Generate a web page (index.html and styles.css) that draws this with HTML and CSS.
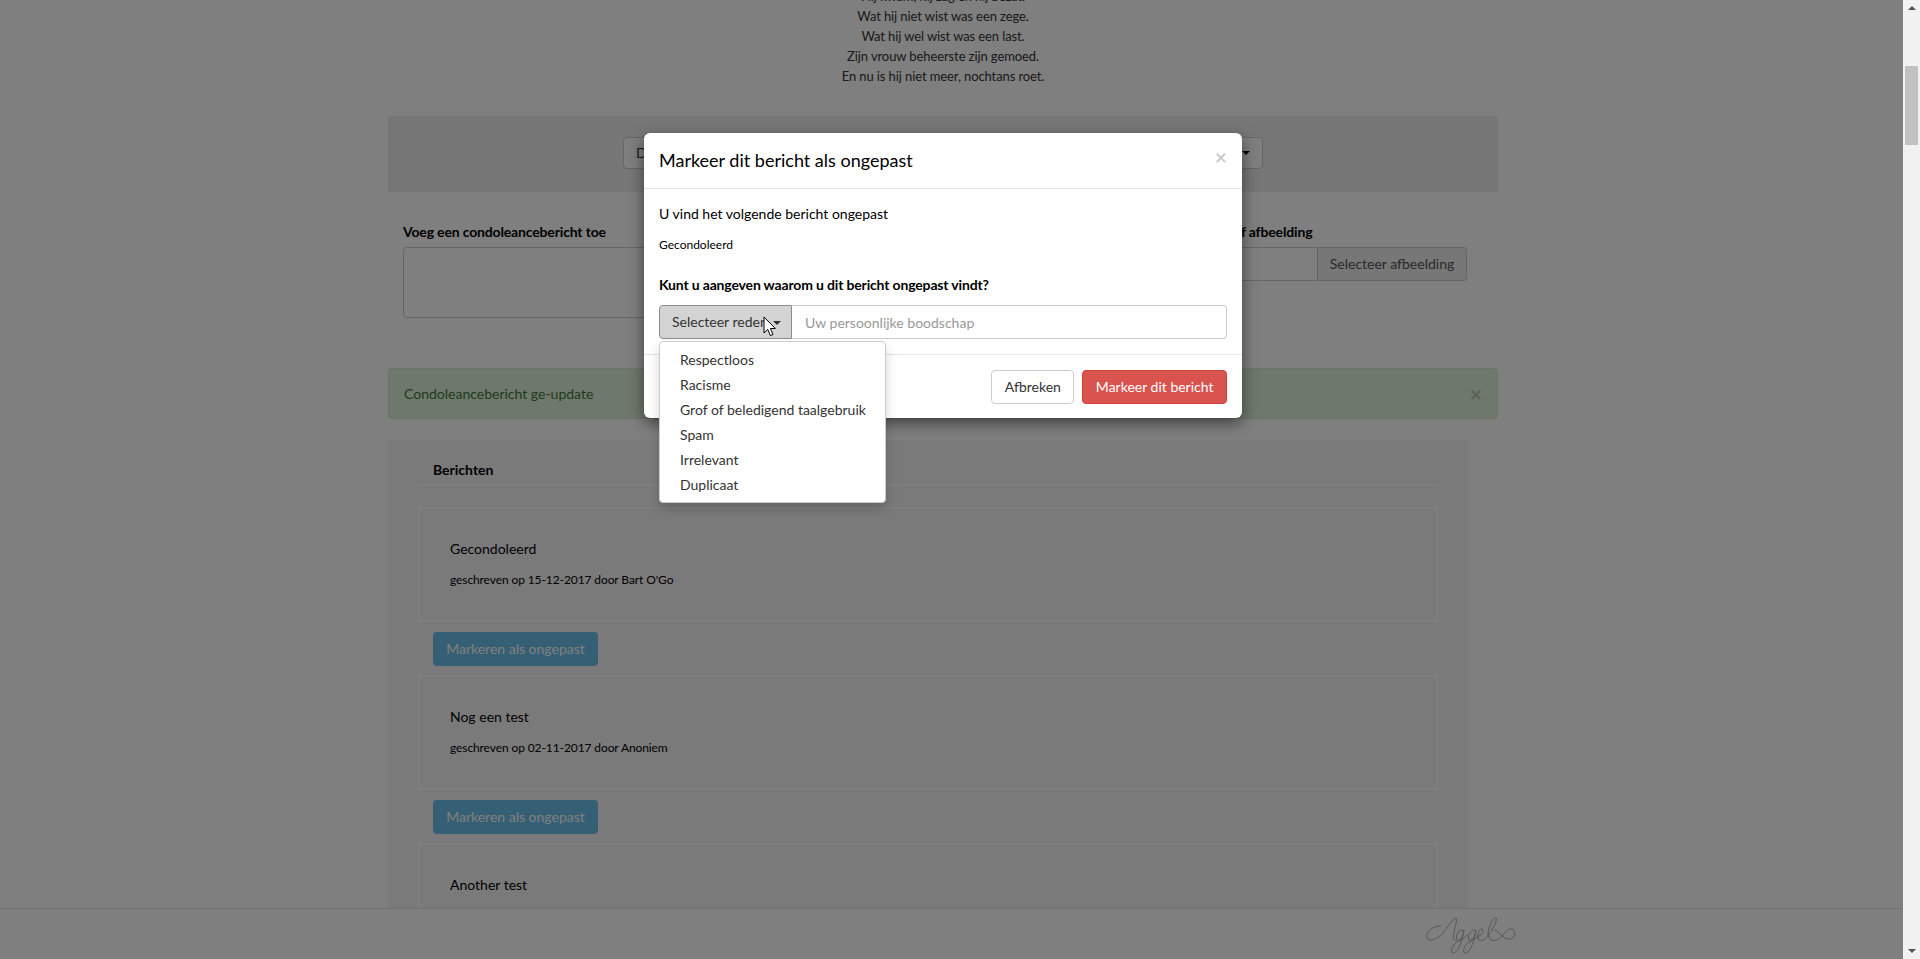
FILE: index.html
```html
<!DOCTYPE html>
<html lang="nl">
<head>
    <meta charset="UTF-8">
    <title>Condoleanceregister</title>
    <link rel="stylesheet" href="styles.css">
</head>
<body>
    <div class="viewport">
        <main class="page">
            <div class="poem">
                <p>Hij kwam, hij zag en hij bezat.</p>
                <p>Wat hij niet wist was een zege.</p>
                <p>Wat hij wel wist was een last.</p>
                <p>Zijn vrouw beheerste zijn gemoed.</p>
                <p>En nu is hij niet meer, nochtans roet.</p>
            </div>

            <div class="well">
                <button class="btn btn-light btn-sort">D <span class="caret"></span></button>
            </div>

            <div class="form-row">
                <div class="form-col">
                    <label>Voeg een condoleancebericht toe</label>
                    <textarea class="form-control message"></textarea>
                </div>
                <div class="form-col form-col-right">
                    <label>Voeg een foto of afbeelding</label>
                    <div class="input-group">
                        <input class="form-control" type="text">
                        <span class="addon">Selecteer afbeelding</span>
                    </div>
                </div>
            </div>

            <div class="alert">
                <span>Condoleancebericht ge-update</span>
                <span class="alert-close">&times;</span>
            </div>

            <section class="panel">
                <h4 class="panel-title">Berichten</h4>

                <div class="post">
                    <p class="post-text">Gecondoleerd</p>
                    <p class="post-meta">geschreven op 15-12-2017 door Bart O'Go</p>
                </div>
                <button class="btn btn-info">Markeren als ongepast</button>

                <div class="post">
                    <p class="post-text">Nog een test</p>
                    <p class="post-meta">geschreven op 02-11-2017 door Anoniem</p>
                </div>
                <button class="btn btn-info">Markeren als ongepast</button>

                <div class="post">
                    <p class="post-text">Another test</p>
                </div>
            </section>
        </main>

        <footer class="footer">
            <svg class="logo" viewBox="0 0 110 50" fill="none" stroke="#b0b0b0" stroke-width="1" stroke-linecap="round">
                <path d="M25 17C16 17 10 25 12 29C14 33 22 31 28 24C33 18 37 10 41 9C43 9 40 17 39 24C38 28 38 32 41 31"/>
                <path d="M48 21C43 20 40 28 42 31C45 33 48 27 49 21C48 30 44 42 39 44C35 45 36 37 42 33C46 31 50 29 52 26"/>
                <path d="M60 21C55 20 52 28 54 31C57 33 60 27 61 21C60 30 56 42 51 44C47 45 48 37 54 33C58 31 62 29 64 27"/>
                <path d="M64 27C67 26 69 22 67 20C64 20 61 27 64 31C67 33 71 30 74 25C78 19 83 11 81 9C78 8 74 16 73 24C73 30 77 33 82 31C87 29 90 21 95 20C99 19 101 24 99 28C96 32 90 30 86 26C84 24 82 21 79 21"/>
            </svg>
        </footer>

        <div class="backdrop"></div>

        <div class="modal">
            <div class="modal-header">
                <h4 class="modal-title">Markeer dit bericht als ongepast</h4>
                <span class="modal-close">&times;</span>
            </div>
            <div class="modal-body">
                <p class="modal-lead">U vind het volgende bericht ongepast</p>
                <p class="modal-quote">Gecondoleerd</p>
                <p class="modal-question">Kunt u aangeven waarom u dit bericht ongepast vindt?</p>
                <div class="reason">
                    <button class="btn btn-reason">Selecteer reden <span class="caret"></span></button>
                    <input class="form-control reason-input" type="text" placeholder="Uw persoonlijke boodschap">
                    <ul class="dropdown">
                        <li>Respectloos</li>
                        <li>Racisme</li>
                        <li>Grof of beledigend taalgebruik</li>
                        <li>Spam</li>
                        <li>Irrelevant</li>
                        <li>Duplicaat</li>
                    </ul>
                    <svg class="cursor" viewBox="0 0 13 21" width="13" height="21">
                        <path d="M1 1V17L4.8 13.4L7.4 19.6L10 18.5L7.4 12.5H12.4Z" fill="#fff" stroke="#000" stroke-width="1"/>
                    </svg>
                </div>
            </div>
            <div class="modal-footer">
                <button class="btn btn-light btn-wide">Afbreken</button>
                <button class="btn btn-danger btn-wide">Markeer dit bericht</button>
            </div>
        </div>
    </div>

    <div class="scrollbar">
        <span class="arrow arrow-up"></span>
        <div class="track"><div class="thumb"></div></div>
        <span class="arrow arrow-down"></span>
    </div>
</body>
</html>
```

FILE: styles.css
```css
* { box-sizing: border-box; }
html, body { height: 100%; margin: 0; overflow: hidden; }
body { display: flex; font-family: Lato, "Open Sans", sans-serif; font-size: 14px; line-height: 20px; color: #333; background: #fff; }
p { margin: 0; }

.viewport { flex: 1; position: relative; overflow: hidden; }
.page { margin-top: -14px; padding-left: 388px; width: 1498px; }

.poem { text-align: center; font-size: 13px; letter-spacing: -.1px; margin-bottom: 30px; }

.well { height: 76px; padding-top: 21px; background: #eee; display: flex; justify-content: center; align-items: flex-start; }

.btn { font: inherit; height: 34px; padding: 6px 12px; border: 1px solid transparent; border-radius: 4px; white-space: nowrap; }
.btn-light { background: #fff; border-color: #ccc; color: #333; }
.btn-sort { width: 640px; height: 32px; padding-top: 4px; padding-bottom: 4px; text-align: left; display: flex; align-items: center; justify-content: space-between; }
.btn-info { display: block; margin-left: 15px; width: 165px; background: #6abeea; color: #fff; }
.btn-danger { background: #d9534f; border-color: #d43f3a; color: #fff; }
.btn-wide { padding-left: 12.5px; padding-right: 12.5px; }

.caret { display: inline-block; width: 0; height: 0; margin-left: 2px; vertical-align: middle; border-top: 4px solid #000; border-left: 4px solid transparent; border-right: 4px solid transparent; }

.form-row { display: flex; justify-content: space-between; padding: 30px 31px 0 15px; height: 177px; }
.form-col-right { width: 322px; }
label { display: block; font-weight: 700; letter-spacing: -.16px; color: #000; margin-bottom: 5px; }
.form-control { display: block; font: inherit; color: #555; background: #fff; border: 1px solid #ccc; border-radius: 4px; padding: 6px 12px; height: 34px; width: 100%; }
.form-control::placeholder { color: #999; }
.message { height: 71px; width: 520px; resize: none; }
.input-group { display: flex; }
.input-group .form-control { flex: 1; border-radius: 4px 0 0 4px; }
.addon { flex: 0 0 149px; height: 34px; padding: 6px 0; text-align: center; color: #555; background: #eee; border: 1px solid #ccc; border-left: 0; border-radius: 0 4px 4px 0; }

.alert { display: flex; justify-content: space-between; align-items: center; height: 51px; padding: 0 15px; background: #dff0d8; border: 1px solid #d6e9c6; border-radius: 4px; color: #3c763d; margin-top: -1px; }
.alert-close { font-size: 21px; font-weight: 700; color: #000; opacity: .2; }

.panel { width: 1080px; margin-top: 21px; padding: 0 30px 40px; background: #f5f5f5; }
.panel-title { margin: 0; padding: 20px 15px 5px; height: 46px; font-size: 14px; font-weight: 700; color: #000; border-bottom: 2px solid #fff; }
.post { height: 115px; margin: 21px 0 10px; padding: 30px; border: 2px solid #fff; color: #000; }
.btn-info + .post { margin-top: 9px; }
.post-text { margin-bottom: 11px; }
.post-meta { font-size: 12px; letter-spacing: -.1px; }

.footer { position: absolute; left: 0; right: 0; bottom: 0; height: 51px; background: #fff; border-top: 1px solid #e7e7e7; display: flex; padding-left: 1415px; }
.logo { width: 110px; height: 50px; }

.backdrop { position: absolute; inset: 0; background: rgba(0,0,0,.5); }

.modal { position: absolute; left: 644px; top: 133px; width: 598px; height: 285px; background: #fff; border-radius: 6px; box-shadow: 0 5px 15px rgba(0,0,0,.5); }
.modal-header { position: relative; height: 56px; padding: 14px 15px; border-bottom: 1px solid #e5e5e5; }
.modal-title { margin: 0; font-size: 18px; font-weight: 400; line-height: 27px; color: #000; }
.modal-close { position: absolute; right: 15px; top: 14px; font-size: 21px; font-weight: 700; color: #000; opacity: .2; }
.modal-body { height: 165px; padding: 15px; color: #000; }
.modal-quote { font-size: 12px; margin-top: 11px; }
.modal-question { margin-top: 20px; font-weight: 700; letter-spacing: -.16px; }
.reason { position: relative; display: flex; margin-top: 10px; }
.btn-reason { flex: 0 0 133px; background: #d4d4d4; border-color: #8c8c8c; border-radius: 4px 0 0 4px; color: #333; padding: 6px 0 6px 12px; text-align: left; }
.btn-reason .caret { border-top-color: #333; }
.reason-input { flex: 1; border-left: 0; border-radius: 0 4px 4px 0; padding-left: 13px; }
.dropdown { position: absolute; left: 0; top: 36px; width: 227px; margin: 0; padding: 5px 0; list-style: none; background: #fff; border: 1px solid #ccc; border-radius: 4px; box-shadow: 0 6px 12px rgba(0,0,0,.175); color: #333; }
.dropdown li { height: 25px; padding: 3px 20px; white-space: nowrap; }
.cursor { position: absolute; left: 104px; top: 11px; }
.modal-footer { display: flex; justify-content: flex-end; gap: 8px; padding: 15px; border-top: 1px solid #e5e5e5; }

.scrollbar { flex: 0 0 17px; display: flex; flex-direction: column; align-items: center; background: #f1f1f1; }
.arrow { flex: 0 0 auto; width: 0; height: 0; margin: 6px 0; border-left: 4px solid transparent; border-right: 4px solid transparent; }
.arrow-up { border-bottom: 4px solid #505050; }
.arrow-down { border-top: 4px solid #505050; }
.track { flex: 1; width: 100%; padding: 50px 2px 0; }
.thumb { height: 79px; background: #c1c1c1; }
```
